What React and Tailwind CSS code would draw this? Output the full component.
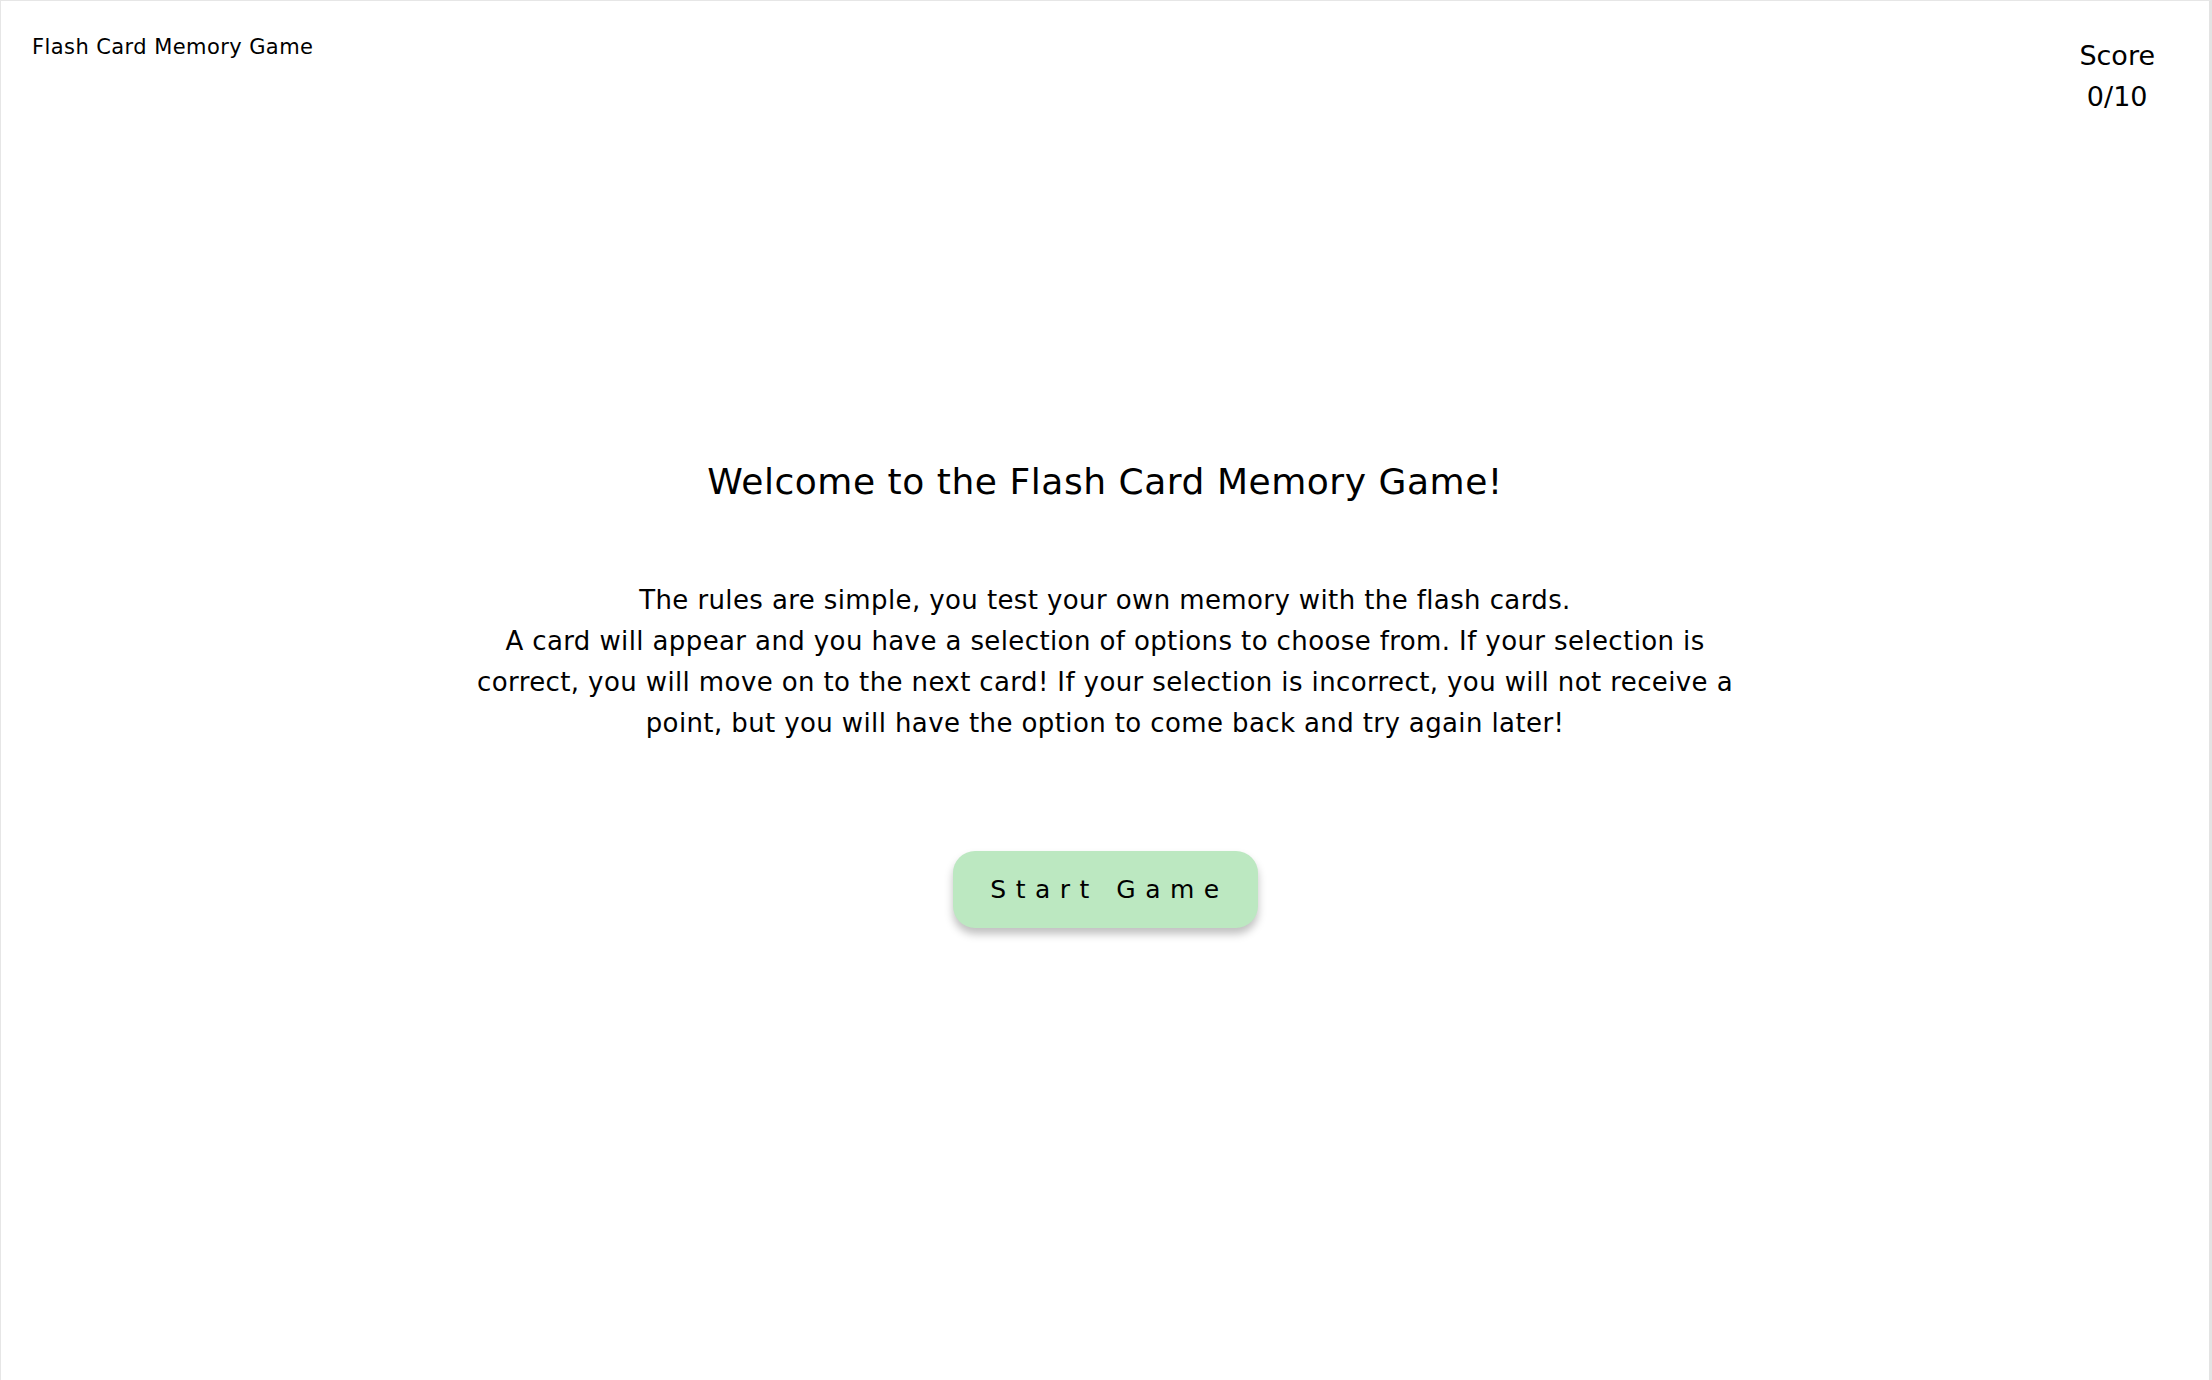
export default function App() {
  return (
    <div className="h-[1380px] w-full overflow-hidden bg-white font-['DejaVu_Sans',sans-serif] text-black">
      <div className="flex h-full flex-col border-l border-t border-r-[3px] border-[#e6e6e6] border-r-[#e3e3e3]">
        <header className="flex items-start justify-between">
          <div className="pl-[31px] pt-[31px] text-[21px] leading-[30px] tracking-[0.02em]">Flash Card Memory Game</div>
          <div className="pr-[54px] pt-[34px] text-center text-[27px] leading-[41px]">
            <div>Score</div>
            <div>0/10</div>
          </div>
        </header>

        <main className="flex flex-col items-center pt-[339px] text-center">
          <h1 className="text-[36px] leading-[51px] tracking-[0.015em]">Welcome to the Flash Card Memory Game!</h1>
          <p className="mt-[73px] w-[1320px] text-[26px] leading-[41px] tracking-[0.015em]">
            The rules are simple, you test your own memory with the flash cards.
            <br />
            A card will appear and you have a selection of options to choose from. If your selection is
            <br />
            correct, you will move on to the next card! If your selection is incorrect, you will not receive a
            <br />
            point, but you will have the option to come back and try again later!
          </p>
          <button className="mt-[107px] h-[77px] w-[305px] rounded-[22px] bg-[#bce8c1] pl-[9px] text-[25px] tracking-[0.38em] shadow-[0_6px_8px_rgba(0,0,0,0.25)]">
            Start Game
          </button>
        </main>
      </div>
    </div>
  )
}
